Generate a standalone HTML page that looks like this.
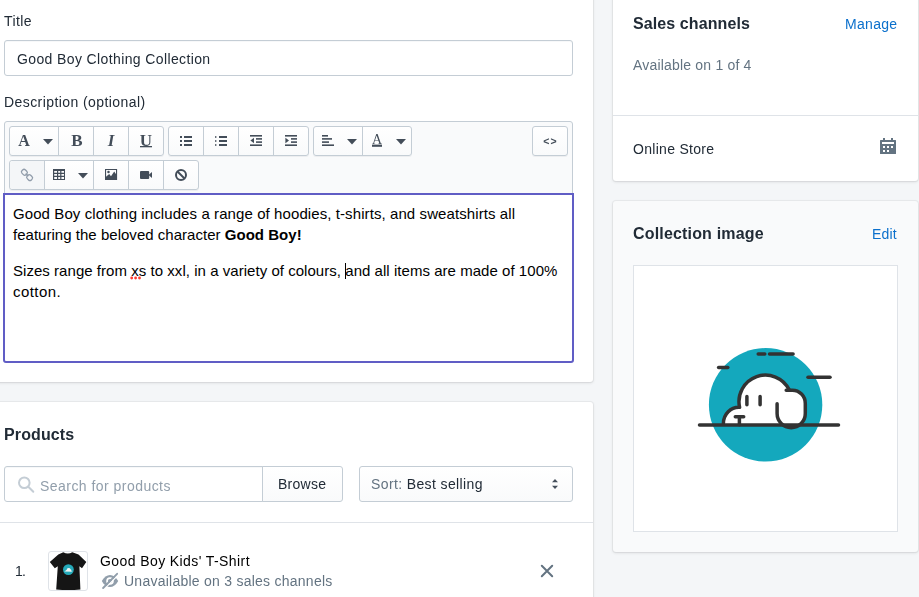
<!DOCTYPE html>
<html lang="en">
<head>
<meta charset="utf-8">
<title>Good Boy Clothing Collection</title>
<style>
*{box-sizing:border-box;margin:0;padding:0}
html,body{width:919px;height:597px;overflow:hidden}
body{background:#f4f6f8;font-family:"Liberation Sans",sans-serif;font-size:14px;color:#212b36;position:relative}
.abs{position:absolute}
.card{position:absolute;background:#fff;border-radius:3px;box-shadow:0 0 0 1px rgba(63,63,68,.05),0 1px 3px 0 rgba(63,63,68,.15)}
.t{position:absolute;white-space:nowrap;line-height:20px;will-change:transform}
.ed{will-change:auto}
.h{font-weight:bold;font-size:16px;line-height:24px}
.link{color:#0b70cc}
.sub{color:#637381}
.input{position:absolute;background:#fff;border:1px solid #c4cdd5;border-radius:3px;box-shadow:inset 0 1px 0 0 rgba(99,115,129,.05)}
.grp{position:absolute;height:30px;border:1px solid #c4cdd5;border-radius:3px;background:linear-gradient(#fff,#f9fafb);display:flex;box-shadow:0 1px 0 0 rgba(22,29,37,.05)}
.grp>div{position:relative;height:28px;border-left:1px solid #c4cdd5}
.grp>div:first-child{border-left:none}
.ico{position:absolute;will-change:transform;font-family:'Liberation Serif',serif;font-size:17px;line-height:22px;height:22px;text-align:center;color:#434d59}
</style>
</head>
<body>

<!-- left card 1 -->
<div class="card" style="left:-20px;top:-20px;width:613px;height:402px"></div>
<div class="t" id="t1" style="left:4px;top:11px;letter-spacing:0.4px">Title</div>
<div class="input" style="left:4px;top:40px;width:569px;height:36px"></div>
<div class="t" id="titleval" style="left:17px;top:49px;color:#212b36;letter-spacing:0.38px">Good Boy Clothing Collection</div>
<div class="t" id="t3" style="left:4px;top:92px;letter-spacing:0.42px">Description (optional)</div>

<!-- editor toolbar -->
<div class="abs" style="left:4px;top:121px;width:569px;height:74px;background:#f9fafb;border:1px solid #c4cdd5;border-radius:3px 3px 0 0"></div>
<div id="toolbar"><div class="grp" style="left:9px;top:126px;width:155px"><div style="width:48px;"></div><div style="width:35px;"></div><div style="width:35px;"></div><div style="width:35px;"></div></div><div class="grp" style="left:168px;top:126px;width:141px"><div style="width:34px;"></div><div style="width:35px;"></div><div style="width:35px;"></div><div style="width:35px;"></div></div><div class="grp" style="left:313px;top:126px;width:99px"><div style="width:48px;"></div><div style="width:49px;"></div></div><div class="grp" style="left:532px;top:126px;width:36px"><div style="width:34px;"></div></div><div class="grp" style="left:9px;top:160px;width:190px"><div style="width:34px;background:#f4f6f8;border-radius:3px 0 0 3px;"></div><div style="width:49px;"></div><div style="width:35px;"></div><div style="width:35px;"></div><div style="width:35px;"></div></div><div class="ico" style="left:17px;top:130px;width:14px;font-weight:bold;font-size:16px">A</div><div class="ico" style="left:69.8px;top:130px;width:14px;font-weight:bold">B</div><div class="ico" style="left:104px;top:130px;width:14px;font-weight:bold;font-style:italic">I</div><div class="ico" style="left:139px;top:130px;width:14px;font-weight:bold">U</div><div class="ico" style="left:370px;top:129px;width:14px;font-size:14px">A</div><div class="ico" id="code" style="left:536px;top:130px;width:28px;font-family:'Liberation Sans',sans-serif;font-weight:bold;font-size:10.5px">&lt;<span style="margin-left:1.2px">&gt;</span></div><svg class="abs" style="left:0;top:120px" width="600" height="76" viewBox="0 120 600 76"><path d="M43 139h10l-5 5.4z" fill="#434d59"/><path d="M347 139h10l-5 5.4z" fill="#434d59"/><path d="M396 139h10l-5 5.4z" fill="#434d59"/><path d="M78 173h10l-5 5.4z" fill="#434d59"/><rect x="140" y="146" width="12" height="1.3" fill="#434d59"/><rect x="372" y="144.6" width="10" height="2.2" fill="#434d59"/><rect x="180" y="136" width="2" height="2" fill="#434d59"/><rect x="184" y="136" width="8" height="2" fill="#434d59"/><rect x="180" y="140" width="2" height="2" fill="#434d59"/><rect x="184" y="140" width="8" height="2" fill="#434d59"/><rect x="180" y="144" width="2" height="2" fill="#434d59"/><rect x="184" y="144" width="8" height="2" fill="#434d59"/><rect x="215" y="136" width="1.4" height="2" fill="#434d59" opacity=".8"/><rect x="219" y="136" width="8" height="2" fill="#434d59"/><rect x="215" y="140" width="1.4" height="2" fill="#434d59" opacity=".8"/><rect x="219" y="140" width="8" height="2" fill="#434d59"/><rect x="215" y="144" width="1.4" height="2" fill="#434d59" opacity=".8"/><rect x="219" y="144" width="8" height="2" fill="#434d59"/><rect x="250" y="135" width="12" height="1.6" fill="#434d59"/><rect x="250" y="144.4" width="12" height="1.6" fill="#434d59"/><rect x="256" y="138.1" width="6" height="1.6" fill="#434d59"/><rect x="256" y="141.3" width="6" height="1.6" fill="#434d59"/><path d="M254 137.7v5.6l-3.6-2.8z" fill="#434d59"/><rect x="285" y="135" width="12" height="1.6" fill="#434d59"/><rect x="285" y="144.4" width="12" height="1.6" fill="#434d59"/><rect x="291" y="138.1" width="6" height="1.6" fill="#434d59"/><rect x="291" y="141.3" width="6" height="1.6" fill="#434d59"/><path d="M285.4 137.7v5.6l3.6-2.8z" fill="#434d59"/><rect x="322" y="135" width="6" height="1.6" fill="#434d59"/><rect x="322" y="138.1" width="10" height="1.6" fill="#434d59"/><rect x="322" y="141.3" width="7" height="1.6" fill="#434d59"/><rect x="322" y="144.4" width="12" height="1.6" fill="#434d59"/><g fill="none" stroke="#909caa" stroke-width="1.25"><rect x="-2.9" y="-2.4" width="5.8" height="4.8" rx="2" transform="translate(24.4 172.3) rotate(45)"/><rect x="-2.9" y="-2.4" width="5.8" height="4.8" rx="2" transform="translate(29.6 177.6) rotate(45)"/><path d="M26.2 174.1l1.6 1.6" stroke-width="1.6" stroke-linecap="round"/></g><path fill-rule="evenodd" fill="#434d59" d="M53 169h12v11h-12zM54.2 171.1v1.7h2.8v-1.7zM54.2 174.1v1.7h2.8v-1.7zM54.2 177.1v1.8h2.8v-1.8zM58.2 171.1v1.7h2.0v-1.7zM58.2 174.1v1.7h2.0v-1.7zM58.2 177.1v1.8h2.0v-1.8zM61.4 171.1v1.7h2.6v-1.7zM61.4 174.1v1.7h2.6v-1.7zM61.4 177.1v1.8h2.6v-1.8z"/><path fill-rule="evenodd" fill="#434d59" d="M105 169h12.1v11h-12.1zM106.1 170.1v8.8h9.9v-8.8z"/><path fill="#434d59" d="M106 179.2v-2.4l3.2-2.7 1.8 2.2 3.2-4.8 1.9 2.8v4.9z"/><circle cx="108.5" cy="172.1" r="1.25" fill="#434d59"/><rect x="140" y="171" width="9.2" height="8" rx="1" fill="#434d59"/><path d="M148.5 175l3.5-3v6z" fill="#434d59"/><circle cx="181" cy="175" r="5" fill="none" stroke="#434d59" stroke-width="2"/><path d="M177.5 171.5l7 7" stroke="#434d59" stroke-width="2"/></svg></div>

<!-- editor body -->
<div class="abs" style="left:3px;top:193px;width:571px;height:170px;background:#fff;border:2px solid #605dc5;border-radius:0 0 3px 3px"></div>
<div class="t ed" id="p1a" style="left:13px;top:203px;color:#000;line-height:21px;font-size:15px;letter-spacing:0.09px">Good Boy clothing includes a range of hoodies, t-shirts, and sweatshirts all</div>
<div class="t ed" id="p1b" style="left:13px;top:224px;color:#000;line-height:21px;font-size:15px;letter-spacing:0.025px">featuring the beloved character <b>Good Boy!</b></div>
<div class="t ed" id="p2a" style="left:13px;top:260px;color:#000;line-height:21px;font-size:15px;letter-spacing:0.04px">Sizes range from xs to xxl, in a variety of colours, and all items are made of 100%</div>
<div class="t ed" id="p2b" style="left:13px;top:281px;color:#000;line-height:21px;font-size:15px;letter-spacing:0.43px">cotton.</div>

<!-- products card -->
<div class="card" style="left:-20px;top:402px;width:613px;height:300px"></div>
<div class="t h" id="t8" style="left:4px;top:423px;letter-spacing:0.12px">Products</div>
<div class="input" style="left:4px;top:466px;width:259px;height:36px;border-radius:3px 0 0 3px"></div>
<div class="t" id="t9" style="left:40px;top:476px;color:#919eab;letter-spacing:0.46px">Search for products</div>
<div class="abs" style="left:262px;top:466px;width:81px;height:36px;border:1px solid #c4cdd5;border-radius:0 3px 3px 0;background:linear-gradient(#fff,#f9fafb)"></div>
<div class="t" id="t10" style="left:278px;top:474px;letter-spacing:0.25px">Browse</div>
<div class="abs" style="left:359px;top:466px;width:214px;height:36px;border:1px solid #c4cdd5;border-radius:3px;background:linear-gradient(#fff,#f9fafb)"></div>
<div class="t" id="t11" style="left:371px;top:474px;letter-spacing:0.38px"><span class="sub">Sort:</span> Best selling</div>
<div class="abs" style="left:0;top:522px;width:593px;height:1px;background:#dfe3e8"></div>
<div class="t" id="t12" style="left:14.9px;top:561px;letter-spacing:-0.8px">1.</div>
<div class="abs" style="left:48px;top:551px;width:40px;height:40px;background:#fff;border:1px solid #dfe3e8;border-radius:3px"></div>
<div class="t" id="t13" style="left:100px;top:551px;color:#000;letter-spacing:0.41px">Good Boy Kids' T-Shirt</div>
<div class="t sub" id="t14" style="left:124px;top:571px;letter-spacing:0.25px">Unavailable on 3 sales channels</div>

<!-- right card 1 -->
<div class="card" style="left:613px;top:-20px;width:305px;height:201px"></div>
<div class="t h" id="t15" style="left:633px;top:12px;letter-spacing:0.1px">Sales channels</div>
<div class="t link" id="t16" style="left:845px;top:14px;letter-spacing:0.3px">Manage</div>
<div class="t sub" id="t17" style="left:633px;top:55px;letter-spacing:0.19px">Available on 1 of 4</div>
<div class="abs" style="left:613px;top:115px;width:305px;height:1px;background:#dfe3e8"></div>
<div class="t" id="t18" style="left:633px;top:139px;letter-spacing:0.3px">Online Store</div>

<!-- right card 2 -->
<div class="card" style="left:613px;top:201px;width:305px;height:351px;background:#f9fafb"></div>
<div class="t h" id="t19" style="left:633px;top:222px;letter-spacing:0.17px">Collection image</div>
<div class="t link" id="t20" style="left:872px;top:224px;letter-spacing:0.2px">Edit</div>
<div class="abs" style="left:633px;top:265px;width:265px;height:267px;background:#fff;border:1px solid #dfe3e8"></div>

<!-- caret + spellcheck dots -->
<div class="abs" style="left:345px;top:263px;width:1px;height:16px;background:#000"></div>
<svg class="abs" style="left:128px;top:275px" width="16" height="6" viewBox="128 275 16 6"><g fill="#ff3b30"><circle cx="131.7" cy="278" r="1.4"/><circle cx="135.6" cy="278" r="1.4"/><circle cx="139.5" cy="278" r="1.4"/></g></svg>

<!-- search icon, sort arrows, remove X, eye-slash -->
<svg class="abs" style="left:0;top:460px" width="600" height="137" viewBox="0 460 600 137">
 <g fill="none" stroke="#c4cdd5" stroke-width="2" stroke-linecap="round"><circle cx="24.3" cy="482.8" r="5.3"/><path d="M28.3 486.8l5 5"/></g>
 <path d="M552 482.2l3-3.3 3 3.3zM552 485.8l3 3.3 3-3.3z" fill="#454f5b"/>
 <path d="M541.8 565.8l10.4 10.4M552.2 565.8l-10.4 10.4" stroke="#637381" stroke-width="2" stroke-linecap="round" fill="none"/>
 <g id="eyeslash">
  <path d="M101.8 581C104 577 107 575 110 575s6 2 8.2 6c-2.2 4-5.2 6-8.2 6s-6-2-8.2-6z" fill="#919eab"/>
  <circle cx="110" cy="581" r="3.8" fill="#fff"/>
  <circle cx="110" cy="581" r="2.1" fill="#919eab"/>
  <path d="M104.2 589.1l14.2-14.4" stroke="#fff" stroke-width="1.3" fill="none"/>
  <path d="M103.1 588l14-14.2" stroke="#919eab" stroke-width="1.9" stroke-linecap="round" fill="none"/>
 </g>
</svg>

<!-- t-shirt thumbnail -->
<svg class="abs" style="left:49px;top:552px" width="38" height="38" viewBox="49 552 38 38">
 <path d="M63.3 552.3q4.5 2.6 9 0l6.2 2.2l7.8 7.6l-4.3 6.2l-2.6-2l1 23.2q-12 1-24.2 0l1.6-23.2l-3 2l-5-6.2l8.5-7.6z" fill="#151515"/>
 <circle cx="68.4" cy="569.6" r="5.4" fill="#25a9b9"/>
 <g transform="translate(68.6 569.8) scale(.8) translate(-68.9 -569.6)"><path d="M64.8 571.4q0.3-1.5 1.6-1.6q0.2-2.6 2.6-2.5q1.8 0 2.3 1.6q1.6 0.3 1.2 2.6q-0.5 0.8-1.7 0.2z" fill="#f4f4f4"/></g>
 <path d="M64.6 571.5h7.6" stroke="#bfe3e8" stroke-width=".6"/>
</svg>

<!-- calendar icon -->
<svg class="abs" style="left:878px;top:136px" width="20" height="20" viewBox="878 136 20 20">
 <path fill="#637381" fill-rule="evenodd" d="M883 138h2v2h6v-2h2v2h2.4q0.6 0 0.6 0.6v12.8q0 0.6-0.6 0.6h-14.8q-0.6 0-0.6-0.6v-12.8q0-0.6 0.6-0.6h2.4zM882 142v2h12v-2zM883 146v2h2v-2zM887 146v2h2v-2zM891 146v2h2v-2zM883 150v2h2v-2zM887 150v2h2v-2z"/>
</svg>

<!-- collection image: dog logo -->
<svg class="abs" style="left:690px;top:340px" width="160" height="130" viewBox="690 340 160 130">
 <circle cx="765.6" cy="404.8" r="56.7" fill="#14a8bd"/>
 <path d="M723.4 425v-1.4A15.5 16.3 0 0 1 740 407.3V425z" fill="#fff"/>
 <path d="M738.9 425V401.6A26.5 26.5 0 0 1 791.9 401.6V425z" fill="#fff"/>
 <path d="M777.1 403.7V390.2h15.3a12.9 13.2 0 0 1 12.9 13.2v10.2a14.1 14.1 0 0 1-28.2 0z" fill="#fff"/>
 <g fill="none" stroke="#333" stroke-width="3.5" stroke-linecap="round" stroke-linejoin="round">
  <path d="M723.4 423.6A15.5 16.3 0 0 1 739.6 407.3A26.5 26.5 0 0 1 789.2 389.8"/>
  <path d="M786.2 390.2h6.2a12.9 13.2 0 0 1 12.9 13.2v10.2a14.1 14.1 0 0 1-28.2 0v-9.9"/>
  <path d="M746.9 396.6v8.2M760.1 396.6v8.2"/>
  <path d="M735.3 416.7h8.4M739.4 416.7v8"/>
  <path d="M699.5 425h139"/>
  <path d="M758.2 354.1h6.6M769.5 354.1h23.6"/>
  <path d="M718.6 367.4h9.2"/>
  <path d="M808 377.3h22"/>
 </g>
</svg>

</body>
</html>
